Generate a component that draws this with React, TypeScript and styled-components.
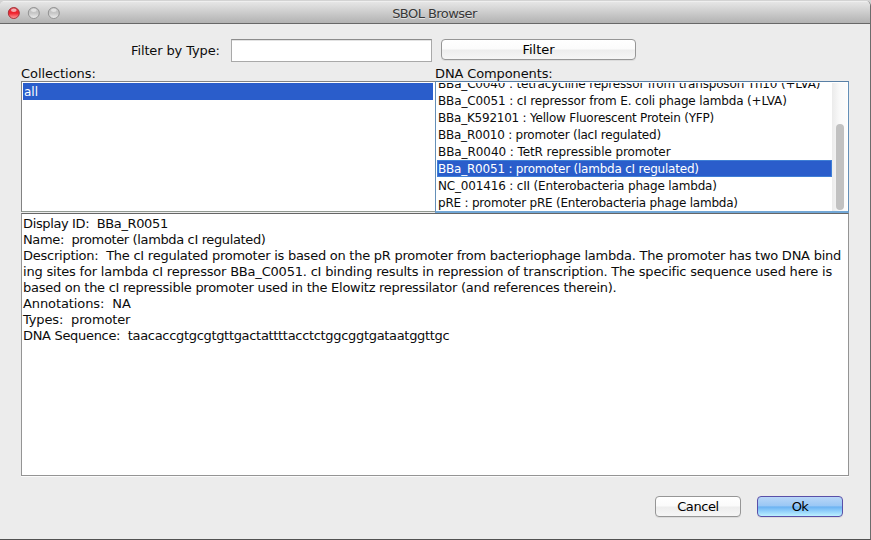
import React from "react";
import styled, { createGlobalStyle, css } from "styled-components";

const GlobalStyle = createGlobalStyle`
  * { box-sizing: border-box; }
  body { margin: 0; background: #cfcfcf; }
  #root { height: 540px; overflow: hidden; }
`;

const Window = styled.div`
  width: 871px;
  height: 540px;
  padding-top: 1px;
  display: flex;
  flex-direction: column;
  font-family: "DejaVu Sans", "Lucida Grande", sans-serif;
  font-size: 13px;
  line-height: 16px;
  color: #0c0c0c;
  background: linear-gradient(#d3d3d3 0 12px, #777 12px);
`;

const Frame = styled.div`
  flex: 1;
  display: flex;
  flex-direction: column;
  border-right: 1px solid #6c6c6c;
  border-bottom: 1px solid #515151;
  border-radius: 5px 5px 0 0;
  background: #ececec;
  overflow: hidden;
`;

const TitleBar = styled.header`
  height: 23px;
  flex: none;
  display: grid;
  grid-template-columns: 1fr auto 1fr;
  align-items: center;
  padding: 0 1px 0 7px;
  border-top: 1px solid #efefef;
  border-bottom: 1px solid #686868;
  background: linear-gradient(#e6e6e6, #b2b2b2);
`;

const Lights = styled.div`
  display: flex;
  gap: 7px;
`;

const Title = styled.h1`
  margin: 0 7px 0 0;
  padding-top: 2px;
  font-size: 13px;
  font-weight: 400;
  line-height: 16px;
  letter-spacing: -0.55px;
  color: #383838;
  text-shadow: 0 1px 0 #e4e4e4;
`;

const Content = styled.main`
  flex: 1;
  display: flex;
  flex-direction: column;
  padding: 15px 21px 22px;
`;

const FilterBar = styled.div`
  height: 27px;
  display: flex;
  align-items: flex-start;
  padding-left: 110px;
`;

const Text = styled.span<{ $spacing?: number }>`
  white-space: pre;
  letter-spacing: ${(p) => p.$spacing ?? 0}px;
`;

const FilterLabel = styled.label`
  width: 100px;
  padding-top: 4px;
`;

const Field = styled.input`
  width: 201px;
  height: 23px;
  margin-right: 9px;
  border: 1px solid #a9a9a9;
  border-top-color: #8c8c8c;
  outline: 0;
  background: #fff;
  box-shadow: inset 0 1px 0 #e3e3e3;
`;

const Button = styled.button<{ $width: number; $primary?: boolean }>`
  width: ${(p) => p.$width}px;
  height: 21px;
  padding: 0;
  border: 1px solid #969696;
  border-radius: 4px;
  font: inherit;
  line-height: 17px;
  color: #000;
  background: linear-gradient(#fff 0%, #fbfbfb 48%, #ededed 52%, #f6f6f6 100%);
  box-shadow: 0 1px 0 #dcdcdc;
  ${(p) =>
    p.$primary &&
    css`
      border-color: #5a4fa8;
      background: linear-gradient(#b9d6f7 0%, #9bc8f5 45%, #6cb3f2 53%, #8dccfa 72%, #bdf1ff 100%);
    `}
`;

const Columns = styled.div`
  display: grid;
  grid-template-columns: 414px 414px;
`;

const ColumnLabel = styled.div`
  height: 15px;
  line-height: 15px;
`;

const ListBox = styled.div<{ $focused?: boolean }>`
  display: flex;
  height: 131px;
  padding: 1px 2px 0 1px;
  border: 1px solid #828282;
  border-right: 0;
  border-bottom-color: #929a92;
  background: #fff;
  ${(p) =>
    p.$focused &&
    css`
      height: 132px;
      padding-right: 1px;
      border: 1px solid #648fb7;
      border-top-color: #587fa5;
      border-bottom: 2px solid #72a7d6;
    `}
`;

const Rows = styled.ul<{ $scrolled?: boolean }>`
  flex: 1;
  height: 128px;
  margin: 0;
  padding: 0;
  overflow: hidden;
  display: flex;
  flex-direction: column;
  justify-content: ${(p) => (p.$scrolled ? "flex-end" : "flex-start")};
  list-style: none;
  font-size: 12px;
`;

const Row = styled.li<{ $selected?: boolean; $focused?: boolean }>`
  flex: none;
  height: 17px;
  line-height: 17px;
  padding: 1px 0 0 1px;
  ${(p) =>
    p.$selected &&
    css`
      color: #fff;
      background: #2a5dcb;
    `}
  ${(p) => p.$focused && "box-shadow: inset 0 0 0 1px #3f7fd6;"}
`;

const Track = styled.div`
  width: 15px;
  height: 128px;
  padding: 41px 3px 1px 4px;
  background: linear-gradient(90deg, #ebebeb, #f9f9f9 50%, #fcfcfc);
`;

const Thumb = styled.div`
  width: 8px;
  height: 86px;
  border-radius: 4px;
  background: #c1c1c1;
`;

const Details = styled.section`
  height: 263px;
  display: flex;
  flex-direction: column;
  padding: 2px 1px;
  border: 1px solid #949494;
  border-top-color: #666;
  background: #fff;
  box-shadow: 0 1px 0 #fbfbfb;
`;

const Actions = styled.footer`
  display: flex;
  justify-content: flex-end;
  gap: 16px;
  padding: 20px 6px 0 0;
`;

const Light = ({ red }: { red?: boolean }) => {
  const id = red ? "close" : "idle";
  return (
    <svg width="13" height="14" viewBox="0 0 13 14">
      <defs>
        <linearGradient id={id} x1="0" y1="0" x2="0" y2="1">
          <stop offset="0" stopColor={red ? "#d8444c" : "#c2c2c2"} />
          <stop offset=".5" stopColor={red ? "#f01f2b" : "#c6c6c6"} />
          <stop offset="1" stopColor={red ? "#ffa3a3" : "#f0f0f0"} />
        </linearGradient>
      </defs>
      <circle cx="6.8" cy="7" r="5.5" fill={`url(#${id})`} stroke={red ? "#a8333a" : "#929292"} strokeWidth="1" />
      <ellipse cx="6.8" cy="4.2" rx="2.8" ry="1.8" fill="#fff" opacity={red ? 0.6 : 0.5} />
    </svg>
  );
};

type Line = [text: string, spacing: number];

const components: Line[] = [
  ["BBa_C0040 : tetracycline repressor from transposon Tn10 (+LVA)", -0.165],
  ["BBa_C0051 : cI repressor from E. coli phage lambda (+LVA)", -0.14],
  ["BBa_K592101 : Yellow Fluorescent Protein (YFP)", -0.225],
  ["BBa_R0010 : promoter (lacI regulated)", -0.235],
  ["BBa_R0040 : TetR repressible promoter", -0.075],
  ["BBa_R0051 : promoter (lambda cI regulated)", -0.21],
  ["NC_001416 : cII (Enterobacteria phage lambda)", -0.17],
  ["pRE : promoter pRE (Enterobacteria phage lambda)", -0.215],
];

const details: Line[] = [
  ["Display ID:  BBa_R0051", -0.37],
  ["Name:  promoter (lambda cI regulated)", -0.365],
  ["Description:  The cI regulated promoter is based on the pR promoter from bacteriophage lambda. The promoter has two DNA bind", -0.251],
  ["ing sites for lambda cI repressor BBa_C0051. cI binding results in repression of transcription. The specific sequence used here is", -0.2],
  ["based on the cI repressible promoter used in the Elowitz repressilator (and references therein).", -0.265],
  ["Annotations:  NA", -0.1],
  ["Types:  promoter", -0.15],
  ["DNA Sequence:  taacaccgtgcgtgttgactattttacctctggcggtgataatggttgc", -0.317],
];

export default function App() {
  return (
    <Window>
      <GlobalStyle />
      <Frame>
        <TitleBar>
          <Lights>
            <Light red />
            <Light />
            <Light />
          </Lights>
          <Title>SBOL Browser</Title>
        </TitleBar>
        <Content>
          <FilterBar>
            <FilterLabel htmlFor="type">
              <Text $spacing={-0.12}>Filter by Type:</Text>
            </FilterLabel>
            <Field id="type" />
            <Button $width={195}>Filter</Button>
          </FilterBar>
          <Columns>
            <div>
              <ColumnLabel>
                <Text $spacing={-0.06}>Collections:</Text>
              </ColumnLabel>
              <ListBox>
                <Rows>
                  <Row $selected>all</Row>
                </Rows>
              </ListBox>
            </div>
            <div>
              <ColumnLabel>
                <Text $spacing={-0.12}>DNA Components:</Text>
              </ColumnLabel>
              <ListBox $focused>
                <Rows $scrolled>
                  {components.map(([text, spacing]) => {
                    const active = text.startsWith("BBa_R0051");
                    return (
                      <Row key={text} $selected={active} $focused={active}>
                        <Text $spacing={spacing}>{text}</Text>
                      </Row>
                    );
                  })}
                </Rows>
                <Track>
                  <Thumb />
                </Track>
              </ListBox>
            </div>
          </Columns>
          <Details>
            {details.map(([text, spacing]) => (
              <Text key={text} $spacing={spacing}>
                {text}
              </Text>
            ))}
          </Details>
          <Actions>
            <Button $width={86}>
              <Text $spacing={-0.4}>Cancel</Text>
            </Button>
            <Button $width={86} $primary>
              <Text $spacing={-0.6}>Ok</Text>
            </Button>
          </Actions>
        </Content>
      </Frame>
    </Window>
  );
}
